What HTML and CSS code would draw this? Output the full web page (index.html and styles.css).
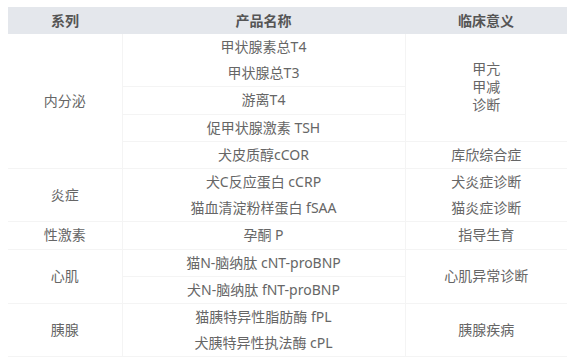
FILE: index.html
```html
<!DOCTYPE html>
<html lang="zh">
<head>
<meta charset="utf-8">
<link rel="stylesheet" href="styles.css">
</head>
<body>
<table class="tbl">
  <colgroup>
    <col class="c1"><col class="c2"><col class="c3">
  </colgroup>
  <thead>
    <tr class="head"><th>系列</th><th>产品名称</th><th>临床意义</th></tr>
  </thead>
  <tbody>
    <tr>
      <td rowspan="5" class="first bb">内分泌</td>
      <td>甲状腺素总T4</td>
      <td rowspan="4" class="bb">甲亢<br>甲减<br>诊断</td>
    </tr>
    <tr><td class="bb">甲状腺总T3</td></tr>
    <tr><td class="bb">游离T4</td></tr>
    <tr><td class="bb">促甲状腺激素 TSH</td></tr>
    <tr><td class="bb">犬皮质醇cCOR</td><td class="bb">库欣综合症</td></tr>
    <tr>
      <td rowspan="2" class="first bb">炎症</td>
      <td>犬C反应蛋白 cCRP</td>
      <td>犬炎症诊断</td>
    </tr>
    <tr><td class="bb">猫血清淀粉样蛋白 fSAA</td><td class="bb">猫炎症诊断</td></tr>
    <tr><td class="first bb">性激素</td><td class="bb">孕酮 P</td><td class="bb">指导生育</td></tr>
    <tr>
      <td rowspan="2" class="first bb">心肌</td>
      <td class="bb">猫N-脑纳肽 cNT-proBNP</td>
      <td rowspan="2" class="bb">心肌异常诊断</td>
    </tr>
    <tr><td class="bb">犬N-脑纳肽 fNT-proBNP</td></tr>
    <tr>
      <td rowspan="2" class="first bb">胰腺</td>
      <td>猫胰特异性脂肪酶 fPL</td>
      <td rowspan="2" class="bb">胰腺疾病</td>
    </tr>
    <tr><td class="bb">犬胰特异性执法酶 cPL</td></tr>
  </tbody>
</table>
</body>
</html>
```
FILE: styles.css
```css
html, body {
  background: #ffffff;
}
body {
  margin: 7px 8px;
  font-family: "Noto Sans", "Noto Sans CJK SC", sans-serif;
  font-size: 14px;
  color: #666666;
}
.tbl {
  width: 559px;
  border-collapse: collapse;
  table-layout: fixed;
}
.c1 { width: 114px; }
.c2 { width: 283px; }
.c3 { width: 162px; }
.head th {
  background: #e4e7ec;
  color: #555555;
  font-weight: bold;
  height: 27px;
  padding: 0;
  line-height: 18px;
  text-align: center;
  vertical-align: middle;
}
tbody td {
  height: 26.2px;
  padding: 0;
  line-height: 18px;
  text-align: center;
  vertical-align: middle;
  border-left: 1px solid #f4f4f4;
}
tbody td.first {
  border-left: 0;
}
.bb {
  border-bottom: 1px solid #f4f4f4;
}
```
